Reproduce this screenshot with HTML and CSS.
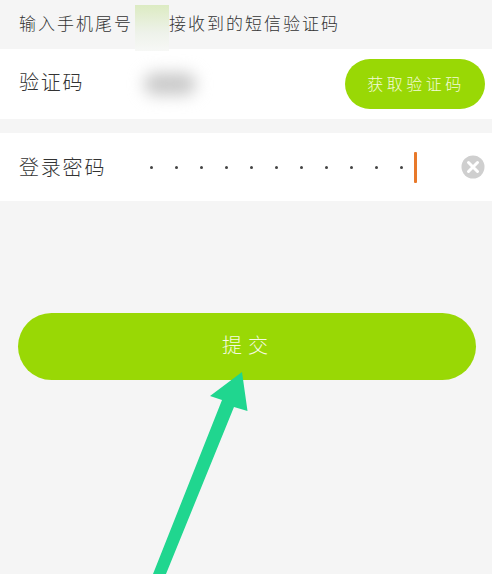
FILE: index.html
```html
<!DOCTYPE html>
<html lang="zh-CN">
<head>
<meta charset="utf-8">
<title>提交</title>
<link rel="stylesheet" href="styles.css">
</head>
<body>
<div class="page">
  <div class="hint">输入手机尾号<span class="hint-gap"></span>接收到的短信验证码</div>
  <div class="row code-row">
    <span class="label">验证码</span>
    <span class="smudge"></span>
    <button class="code-btn">获取验证码</button>
  </div>
  <div class="row pass-row">
    <span class="label">登录密码</span>
    <span class="dots">
      <i></i><i></i><i></i><i></i><i></i><i></i><i></i><i></i><i></i><i></i><i></i>
    </span>
    <span class="cursor"></span>
    <svg class="clear" viewBox="0 0 24 24" width="24" height="24">
      <circle cx="12" cy="12" r="11.5" fill="#cfcfcf"/>
      <path d="M7.5 7.5 16.5 16.5M16.5 7.5 7.5 16.5" stroke="#fff" stroke-width="3" stroke-linecap="round"/>
    </svg>
  </div>
  <button class="submit">提交</button>
  <div class="patch"></div>
  <svg class="arrow" viewBox="0 0 492 574" width="492" height="574">
    <path d="M242 372 247.500 411 234 407 166 574 153 574 222 400 210 396Z" fill="#20d68f"/>
  </svg>
</div>
</body>
</html>
```

FILE: styles.css
```css
* { box-sizing: border-box; }
html, body { margin: 0; padding: 0; }
body {
  width: 492px;
  height: 574px;
  overflow: hidden;
  background: #f5f5f5;
  font-family: "Noto Sans CJK SC", "Noto Sans", sans-serif;
  font-weight: 300;
  color: #333;
}
.page {
  position: relative;
  width: 492px;
  height: 574px;
  overflow: hidden;
  background: #f5f5f5;
}
.hint {
  height: 49px;
  padding: 0 0 4px 19px;
  display: flex;
  align-items: center;
  font-size: 17px;
  letter-spacing: 2px;
  color: #333;
  white-space: nowrap;
}
.hint-gap { width: 36px; flex: none; }
.row {
  background: #fff;
  display: flex;
  align-items: center;
  padding-left: 19px;
}
.label {
  font-size: 20px;
  letter-spacing: 1.800px;
  padding-bottom: 5px;
  color: #333;
  white-space: nowrap;
}
.code-row {
  height: 70px;
  margin-bottom: 14px;
  justify-content: space-between;
  padding-right: 7px;
}
.smudge {
  width: 52px;
  height: 22px;
  margin-left: 60px;
  margin-right: auto;
  border-radius: 11px;
  background: #c8c8c8;
  filter: blur(8px);
}
.code-btn {
  width: 140px;
  height: 50px;
  border: 0;
  padding: 0 0 2px 2px;
  border-radius: 25px;
  background: #99d805;
  color: #f2fbd8;
  font: inherit;
  font-size: 16px;
  letter-spacing: 3.500px;
}
.pass-row {
  height: 68px;
  padding-right: 7px;
}
.pass-row .label {
  padding-bottom: 1px;
}
.dots {
  display: flex;
  gap: 22px;
  margin-left: 44px;
}
.dots i {
  display: block;
  width: 3px;
  height: 3px;
  border-radius: 50%;
  background: #444;
}
.cursor {
  width: 3px;
  height: 31px;
  margin-left: 11px;
  border-radius: 1px;
  background: #e8792a;
}
.clear {
  margin-left: auto;
  flex: none;
}
.submit {
  display: block;
  width: 458px;
  height: 67px;
  margin: 112px 0 0 18px;
  border: 0;
  padding: 0 0 4px 2px;
  border-radius: 34px;
  background: #99d805;
  color: #f6fbe2;
  font: inherit;
  font-size: 20px;
  letter-spacing: 6px;
}
.patch {
  position: absolute;
  left: 135px;
  top: 5px;
  width: 34px;
  height: 46px;
  background: linear-gradient(#dcebc2, #eef2ea 60%, #f7f8f6);
}
.arrow {
  position: absolute;
  left: 0;
  top: 0;
}
```
